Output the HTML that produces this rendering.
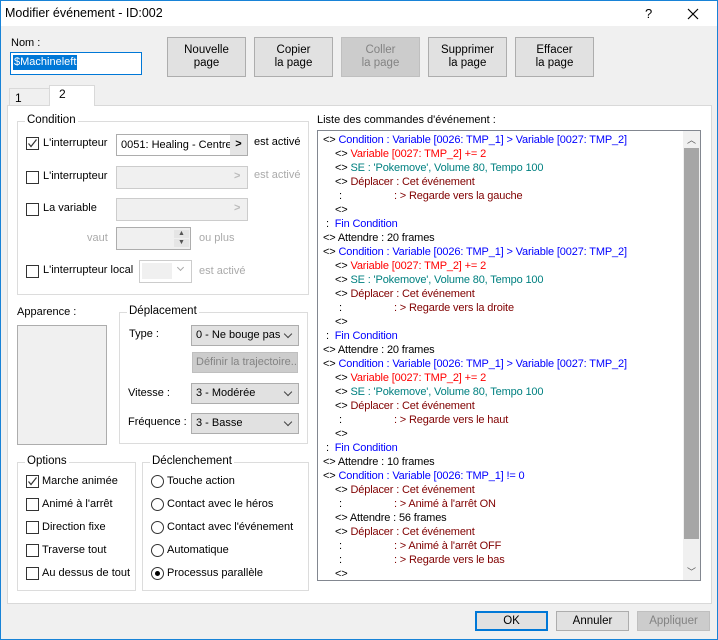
<!DOCTYPE html>
<html><head><meta charset="utf-8"><style>
*{box-sizing:border-box;margin:0;padding:0}
body{width:718px;height:640px;overflow:hidden;background:#f0f0f0;font-family:"Liberation Sans",sans-serif;font-size:11px;color:#000;position:relative}
.a{position:absolute;white-space:nowrap}
.win{position:absolute;left:0;top:0;width:718px;height:640px;border:1px solid #1883d7}
.title{position:absolute;left:1px;top:1px;width:716px;height:25px;background:#fff}
.btn{position:absolute;border:1px solid #adadad;background:#e1e1e1;text-align:center;line-height:13px;font-size:11.5px;display:flex;align-items:center;justify-content:center}
.dis{background:#cccccc;border-color:#bfbfbf;color:#838383}
.grp{position:absolute;border:1px solid #dcdcdc}
.gl{position:absolute;background:#fff;padding:0 2px;top:-8px;left:7px;font-size:11.5px}
.cb{position:absolute;width:13px;height:13px;border:1px solid #333;background:#fff}
.rd{position:absolute;width:13px;height:13px;border:1px solid #333;border-radius:50%;background:#fff}
.combo{position:absolute;border:1px solid #adadad;background:#e1e1e1;padding-left:4px;line-height:18px}
.combo:after{content:"";position:absolute;right:7px;top:5px;width:5px;height:5px;border-right:1px solid #444;border-bottom:1px solid #444;transform:rotate(45deg)}
.l{position:absolute;left:323px;white-space:nowrap;line-height:14px;height:14px;font-size:11px;letter-spacing:-0.15px}
.b{color:#0000ff}.r{color:#ff0000}.t{color:#008080}.d{color:#800000}
</style></head><body>
<div class="win"></div>
<div class="title"></div>
<div class="a" style="left:5px;top:6px;font-size:12.5px">Modifier événement - ID:002</div>
<div class="a" style="left:645px;top:6px;font-size:13px">?</div>
<svg class="a" style="left:687px;top:8px" width="12" height="12"><path d="M1 1L11 11M11 1L1 11" stroke="#000" stroke-width="1.2"/></svg>

<div class="a" style="left:11px;top:37px">Nom :</div>
<div class="a" style="left:10px;top:52px;width:132px;height:23px;border:1px solid #0078d7;background:#fff"></div>
<div class="a" style="left:13px;top:55px;height:15px;background:#0078d7;color:#fff;line-height:15px;padding:0 1px">$Machineleft</div>

<div class="btn" style="left:167px;top:37px;width:79px;height:40px">Nouvelle<br>page</div>
<div class="btn" style="left:254px;top:37px;width:79px;height:40px">Copier<br>la page</div>
<div class="btn dis" style="left:341px;top:37px;width:79px;height:40px">Coller<br>la page</div>
<div class="btn" style="left:428px;top:37px;width:79px;height:40px">Supprimer<br>la page</div>
<div class="btn" style="left:515px;top:37px;width:79px;height:40px">Effacer<br>la page</div>

<div class="a" style="left:7px;top:105px;width:705px;height:499px;border:1px solid #d9d9d9;background:#fff"></div>
<div class="a" style="left:9px;top:88px;width:41px;height:18px;border:1px solid #d9d9d9;background:#f0f0f0;padding-left:5px;line-height:18px;font-size:12px">1</div>
<div class="a" style="left:49px;top:85px;width:46px;height:21px;border:1px solid #d9d9d9;border-bottom:none;background:#fff;padding-left:9px;line-height:17px;font-size:12px">2</div>

<div class="grp" style="left:17px;top:121px;width:292px;height:174px"><span class="gl">Condition</span></div>
<div class="cb" style="left:26px;top:137px"></div>
<svg class="a" style="left:27px;top:138px" width="11" height="11"><path d="M1.5 5.5L4 8.5L9.5 1.5" stroke="#333" fill="none" stroke-width="1.2"/></svg>
<div class="a" style="left:43px;top:137px">L'interrupteur</div>
<div class="a" style="left:116px;top:134px;width:132px;height:22px;border:1px solid #adadad;background:#fff;padding-left:4px;line-height:20px">0051: Healing - Centre</div>
<div class="a" style="left:230px;top:135px;width:17px;height:20px;background:#e5e5e5;text-align:center;line-height:19px;font-weight:bold">&gt;</div>
<div class="a" style="left:254px;top:136px">est activé</div>

<div class="cb" style="left:26px;top:171px"></div>
<div class="a" style="left:43px;top:170px">L'interrupteur</div>
<div class="a" style="left:116px;top:166px;width:132px;height:23px;border:1px solid #ccc;background:#f0f0f0"></div>
<div class="a" style="left:234px;top:170px;color:#bbb;font-weight:bold">&gt;</div>
<div class="a" style="left:254px;top:169px;color:#aaa">est activé</div>

<div class="cb" style="left:26px;top:203px"></div>
<div class="a" style="left:43px;top:202px">La variable</div>
<div class="a" style="left:116px;top:198px;width:132px;height:23px;border:1px solid #ccc;background:#f0f0f0"></div>
<div class="a" style="left:234px;top:202px;color:#bbb;font-weight:bold">&gt;</div>

<div class="a" style="left:87px;top:232px;color:#aaa">vaut</div>
<div class="a" style="left:116px;top:227px;width:75px;height:23px;border:1px solid #adadad;background:#f0f0f0"></div>
<div class="a" style="left:174px;top:230px;width:15px;height:8px;font-size:7px;text-align:center;color:#555;background:#e5e5e5">▲</div>
<div class="a" style="left:174px;top:239px;width:15px;height:8px;font-size:7px;text-align:center;color:#555;background:#e5e5e5">▼</div>
<div class="a" style="left:199px;top:232px;color:#aaa">ou plus</div>

<div class="cb" style="left:26px;top:265px"></div>
<div class="a" style="left:43px;top:264px">L'interrupteur local</div>
<div class="a" style="left:139px;top:260px;width:53px;height:23px;border:1px solid #ccc;background:#fff"></div>
<div class="a" style="left:142px;top:263px;width:30px;height:16px;background:#f0f0f0"></div>
<div class="a" style="left:178px;top:265px;width:5px;height:5px;border-right:1px solid #aaa;border-bottom:1px solid #aaa;transform:rotate(45deg)"></div>
<div class="a" style="left:199px;top:265px;color:#aaa">est activé</div>

<div class="a" style="left:17px;top:306px">Apparence :</div>
<div class="a" style="left:17px;top:325px;width:90px;height:120px;border:1px solid #adadad;background:#f0f0f0"></div>

<div class="grp" style="left:119px;top:312px;width:189px;height:132px"><span class="gl">Déplacement</span></div>
<div class="a" style="left:129px;top:328px">Type :</div>
<div class="combo" style="left:191px;top:325px;width:108px;height:21px">0 - Ne bouge pas</div>
<div class="a" style="left:192px;top:352px;width:106px;height:21px;background:#cccccc;border:1px solid #bfbfbf;color:#838383;line-height:19px;padding-left:3px;overflow:hidden">Définir la trajectoire...</div>
<div class="a" style="left:128px;top:387px">Vitesse :</div>
<div class="combo" style="left:191px;top:383px;width:108px;height:21px">3 - Modérée</div>
<div class="a" style="left:128px;top:416px">Fréquence :</div>
<div class="combo" style="left:191px;top:413px;width:108px;height:21px">3 - Basse</div>

<div class="grp" style="left:17px;top:462px;width:119px;height:129px"><span class="gl">Options</span></div>
<div class="cb" style="left:26px;top:475px"></div>
<svg class="a" style="left:27px;top:476px" width="11" height="11"><path d="M1.5 5.5L4 8.5L9.5 1.5" stroke="#333" fill="none" stroke-width="1.2"/></svg>
<div class="a" style="left:42px;top:475px">Marche animée</div>
<div class="cb" style="left:26px;top:498px"></div><div class="a" style="left:42px;top:498px">Animé à l'arrêt</div>
<div class="cb" style="left:26px;top:521px"></div><div class="a" style="left:42px;top:521px">Direction fixe</div>
<div class="cb" style="left:26px;top:544px"></div><div class="a" style="left:42px;top:544px">Traverse tout</div>
<div class="cb" style="left:26px;top:567px"></div><div class="a" style="left:42px;top:567px">Au dessus de tout</div>

<div class="grp" style="left:142px;top:462px;width:167px;height:129px"><span class="gl">Déclenchement</span></div>
<div class="rd" style="left:151px;top:475px"></div><div class="a" style="left:167px;top:475px">Touche action</div>
<div class="rd" style="left:151px;top:498px"></div><div class="a" style="left:167px;top:498px">Contact avec le héros</div>
<div class="rd" style="left:151px;top:521px"></div><div class="a" style="left:167px;top:521px">Contact avec l'événement</div>
<div class="rd" style="left:151px;top:544px"></div><div class="a" style="left:167px;top:544px">Automatique</div>
<div class="rd" style="left:151px;top:567px"></div><div class="a" style="left:155px;top:571px;width:5px;height:5px;border-radius:50%;background:#000"></div><div class="a" style="left:167px;top:567px">Processus parallèle</div>

<div class="a" style="left:317px;top:114px">Liste des commandes d'événement :</div>
<div class="a" style="left:317px;top:130px;width:384px;height:451px;border:1px solid #828790;background:#fff"></div>
<div class="a" style="left:683px;top:131px;width:17px;height:449px;background:#f0f0f0"></div>
<div class="a" style="left:684px;top:148px;width:15px;height:391px;background:#a6a6a6"></div>
<div class="a" style="left:684px;top:133px;width:15px;font-size:9px;text-align:center;color:#555">︿</div>
<div class="a" style="left:684px;top:565px;width:15px;font-size:9px;text-align:center;color:#555">﹀</div>

<div class="l" style="top:133px">&lt;&gt; <span class="b">Condition : Variable [0026: TMP_1] &gt; Variable [0027: TMP_2]</span></div>
<div class="l" style="top:147px;left:335px">&lt;&gt; <span class="r">Variable [0027: TMP_2] += 2</span></div>
<div class="l" style="top:161px;left:335px">&lt;&gt; <span class="t">SE : 'Pokemove', Volume 80, Tempo 100</span></div>
<div class="l" style="top:175px;left:335px">&lt;&gt; <span class="d">Déplacer : Cet événement</span></div>
<div class="l" style="top:189px;left:339px">:</div><div class="l d" style="top:189px;left:394px">: &gt; Regarde vers la gauche</div>
<div class="l" style="top:203px;left:335px">&lt;&gt;</div>
<div class="l" style="top:217px;left:326px">: &nbsp;<span class="b">Fin Condition</span></div>
<div class="l" style="top:231px">&lt;&gt; Attendre : 20 frames</div>

<div class="l" style="top:245px">&lt;&gt; <span class="b">Condition : Variable [0026: TMP_1] &gt; Variable [0027: TMP_2]</span></div>
<div class="l" style="top:259px;left:335px">&lt;&gt; <span class="r">Variable [0027: TMP_2] += 2</span></div>
<div class="l" style="top:273px;left:335px">&lt;&gt; <span class="t">SE : 'Pokemove', Volume 80, Tempo 100</span></div>
<div class="l" style="top:287px;left:335px">&lt;&gt; <span class="d">Déplacer : Cet événement</span></div>
<div class="l" style="top:301px;left:339px">:</div><div class="l d" style="top:301px;left:394px">: &gt; Regarde vers la droite</div>
<div class="l" style="top:315px;left:335px">&lt;&gt;</div>
<div class="l" style="top:329px;left:326px">: &nbsp;<span class="b">Fin Condition</span></div>
<div class="l" style="top:343px">&lt;&gt; Attendre : 20 frames</div>

<div class="l" style="top:357px">&lt;&gt; <span class="b">Condition : Variable [0026: TMP_1] &gt; Variable [0027: TMP_2]</span></div>
<div class="l" style="top:371px;left:335px">&lt;&gt; <span class="r">Variable [0027: TMP_2] += 2</span></div>
<div class="l" style="top:385px;left:335px">&lt;&gt; <span class="t">SE : 'Pokemove', Volume 80, Tempo 100</span></div>
<div class="l" style="top:399px;left:335px">&lt;&gt; <span class="d">Déplacer : Cet événement</span></div>
<div class="l" style="top:413px;left:339px">:</div><div class="l d" style="top:413px;left:394px">: &gt; Regarde vers le haut</div>
<div class="l" style="top:427px;left:335px">&lt;&gt;</div>
<div class="l" style="top:441px;left:326px">: &nbsp;<span class="b">Fin Condition</span></div>
<div class="l" style="top:455px">&lt;&gt; Attendre : 10 frames</div>

<div class="l" style="top:469px">&lt;&gt; <span class="b">Condition : Variable [0026: TMP_1] != 0</span></div>
<div class="l" style="top:483px;left:335px">&lt;&gt; <span class="d">Déplacer : Cet événement</span></div>
<div class="l" style="top:497px;left:339px">:</div><div class="l d" style="top:497px;left:394px">: &gt; Animé à l'arrêt ON</div>
<div class="l" style="top:511px;left:335px">&lt;&gt; Attendre : 56 frames</div>
<div class="l" style="top:525px;left:335px">&lt;&gt; <span class="d">Déplacer : Cet événement</span></div>
<div class="l" style="top:539px;left:339px">:</div><div class="l d" style="top:539px;left:394px">: &gt; Animé à l'arrêt OFF</div>
<div class="l" style="top:553px;left:339px">:</div><div class="l d" style="top:553px;left:394px">: &gt; Regarde vers le bas</div>
<div class="l" style="top:567px;left:335px">&lt;&gt;</div>

<div class="btn" style="left:475px;top:611px;width:73px;height:20px;border:2px solid #0078d7">OK</div>
<div class="btn" style="left:556px;top:611px;width:73px;height:20px">Annuler</div>
<div class="btn dis" style="left:637px;top:611px;width:73px;height:20px">Appliquer</div>
</body></html>
